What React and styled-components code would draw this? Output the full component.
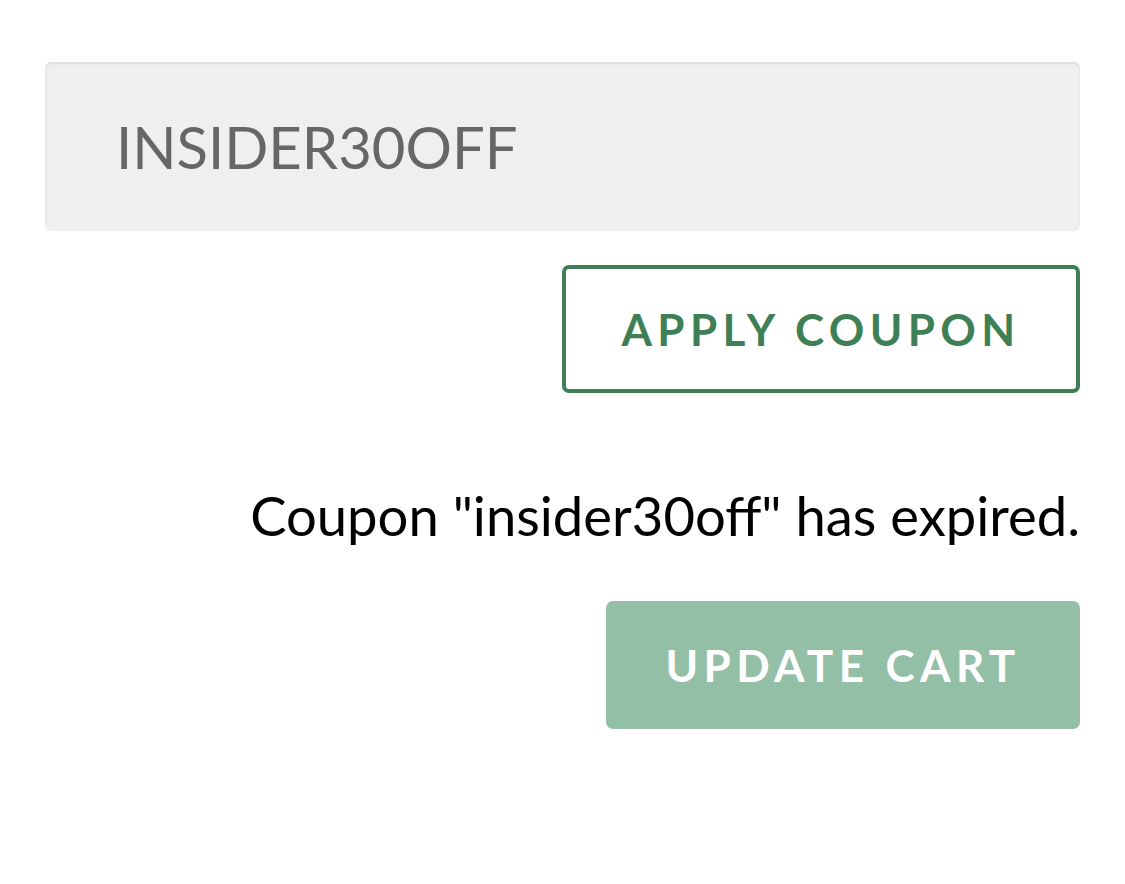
import React from "react";
import styled, { createGlobalStyle } from "styled-components";

const Global = createGlobalStyle`
  html, body { margin: 0; padding: 0; background: #fff; }
  body { font-family: Lato, "Open Sans", sans-serif; }
`;

const Page = styled.div`
  width: 1125px;
  height: 884px;
  box-sizing: border-box;
  padding: 62px 45px 0 45px;
  display: flex;
  flex-direction: column;
  align-items: flex-end;
`;

const CouponInput = styled.input`
  width: 100%;
  height: 169px;
  box-sizing: border-box;
  border: none;
  border-radius: 6px;
  background: #efefef;
  box-shadow: inset 0 2px 2px rgba(0, 0, 0, 0.08);
  padding: 0 0 0 71px;
  font-family: Lato, sans-serif;
  font-size: 58px;
  color: #666;
  outline: none;
`;

const Button = styled.button`
  box-sizing: border-box;
  height: 128px;
  width: ${(p) => p.$w}px;
  border-radius: 7px;
  border: ${(p) => (p.$outline ? "4px solid #3f7f55" : "none")};
  background: ${(p) => (p.$outline ? "#fff" : "#94bfa7")};
  color: ${(p) => (p.$outline ? "#3f7f55" : "#fff")};
  font-family: Lato, sans-serif;
  font-weight: 700;
  font-size: 44px;
  letter-spacing: 5.4px;
  text-transform: uppercase;
  padding: 0;
  margin-top: ${(p) => p.$mt}px;
`;

const Message = styled.p`
  margin: 92px 0 0 0;
  font-family: Lato, sans-serif;
  font-size: 54.4px;
  line-height: 60px;
  color: #000;
  text-align: right;
`;

export default function App() {
  return (
    <>
      <Global />
      <Page>
        <CouponInput defaultValue="INSIDER30OFF" />
        <Button $outline $w={518} $mt={34}>Apply Coupon</Button>
        <Message>Coupon "insider30off" has expired.</Message>
        <Button $w={474} $mt={56}>Update Cart</Button>
      </Page>
    </>
  );
}
